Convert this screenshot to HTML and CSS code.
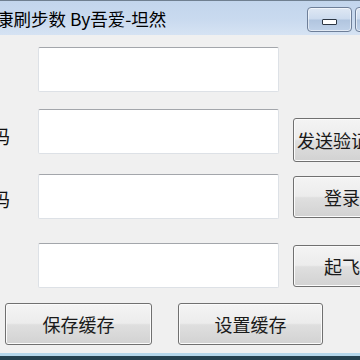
FILE: index.html
```html
<!DOCTYPE html>
<html lang="zh-CN">
<head>
<meta charset="utf-8">
<title>健康刷步数</title>
<link rel="stylesheet" href="styles.css">
</head>
<body>
<div class="window">
  <div class="titlebar">
    <div class="title">康刷步数 By吾爱-坦然</div>
    <div class="controls">
      <div class="cbtn min"><span class="min-glyph"></span></div>
      <div class="cbtn max"></div>
    </div>
  </div>
  <div class="client">
    <div class="row row1">
      <div class="label"></div>
      <div class="field"></div>
    </div>
    <div class="row row2">
      <div class="label lbl2">验证码</div>
      <div class="field"></div>
      <div class="btn side send">发送验证码</div>
    </div>
    <div class="row row3">
      <div class="label lbl3">密码</div>
      <div class="field"></div>
      <div class="btn side">登录</div>
    </div>
    <div class="row row4">
      <div class="label"></div>
      <div class="field"></div>
      <div class="btn side">起飞</div>
    </div>
    <div class="bottom">
      <div class="btn save">保存缓存</div>
      <div class="btn setc">设置缓存</div>
    </div>
  </div>
  <div class="frame-bottom"></div>
</div>
</body>
</html>
```
FILE: styles.css
```css
html, body {
  margin: 0;
  padding: 0;
}
body {
  width: 360px;
  height: 360px;
  overflow: hidden;
  background: #f0f0f0;
  font-family: "Noto Sans CJK SC", "Noto Sans", sans-serif;
  color: #111;
}
.window {
  width: 360px;
  height: 360px;
  display: flex;
  flex-direction: column;
  overflow: hidden;
}
.titlebar {
  height: 35px;
  flex: none;
  box-sizing: border-box;
  border-top: 1px solid #6f7f90;
  background: linear-gradient(#c2d5ec 0%, #c9daef 55%, #d6e3f3 100%);
  display: flex;
  align-items: center;
  justify-content: space-between;
}
.title {
  margin-left: -4px;
  margin-top: 0;
  font-size: 17.5px;
  white-space: nowrap;
  color: #000;
}
.controls {
  display: flex;
  align-self: flex-start;
  margin-top: 6px;
  gap: 3px;
  margin-right: -40px;
}
.cbtn {
  width: 45px;
  height: 25px;
  box-sizing: border-box;
  border: 1px solid #6e7f99;
  border-radius: 4px;
  background: linear-gradient(#dfe8f4 0%, #ccdbee 48%, #b1c5df 52%, #c0d2e9 100%);
  box-shadow: inset 0 0 0 1px rgba(255,255,255,0.55);
  display: flex;
  align-items: center;
  justify-content: center;
}
.min-glyph {
  width: 15px;
  height: 6px;
  box-sizing: border-box;
  margin-top: 5px;
  background: #fff;
  border: 1px solid #2d3744;
  border-radius: 1px;
}
.client {
  flex: 1;
  display: flex;
  flex-direction: column;
}
.row {
  height: 45px;
  display: flex;
  align-items: flex-start;
  flex: none;
}
.row1 { margin-top: 12px; }
.row2 { margin-top: 17px; }
.row3 { margin-top: 20px; }
.row4 { margin-top: 24px; }
.label {
  width: 10px;
  height: 45px;
  display: flex;
  justify-content: flex-end;
  align-items: center;
  white-space: nowrap;
  font-size: 19px;
  line-height: 1;
  flex: none;
}
.lbl2 { padding-top: 8px; box-sizing: border-box; }
.lbl3 { padding-top: 3px; box-sizing: border-box; }
.field {
  margin-left: 28px;
  width: 241px;
  height: 45px;
  flex: none;
  box-sizing: border-box;
  background: #fff;
  border: 1px solid #dde1e6;
  border-top-color: #a3a6ab;
  border-radius: 2px;
}
.btn {
  box-sizing: border-box;
  border: 1px solid #707070;
  border-radius: 3px;
  background: linear-gradient(#f4f4f4 0%, #ececec 48%, #dfdfdf 52%, #d2d2d2 100%);
  box-shadow: inset 0 0 0 1px #fbfbfb;
  display: flex;
  align-items: center;
  justify-content: center;
  font-size: 18px;
  white-space: nowrap;
  color: #1a1a1a;
  flex: none;
}
.side {
  margin-left: 14px;
  width: 98px;
  height: 42px;
  margin-top: 2px;
}
.send {
  height: 44px;
  margin-top: 9px;
}
.bottom {
  margin-top: 15px;
  display: flex;
  padding-left: 5px;
  gap: 26px;
}
.save {
  width: 147px;
  height: 42px;
}
.setc {
  width: 145px;
  height: 42px;
}
.frame-bottom {
  height: 7px;
  flex: none;
  box-sizing: border-box;
  border-top: 3px solid #b4d6ea;
  background: #24404f;
}
```
